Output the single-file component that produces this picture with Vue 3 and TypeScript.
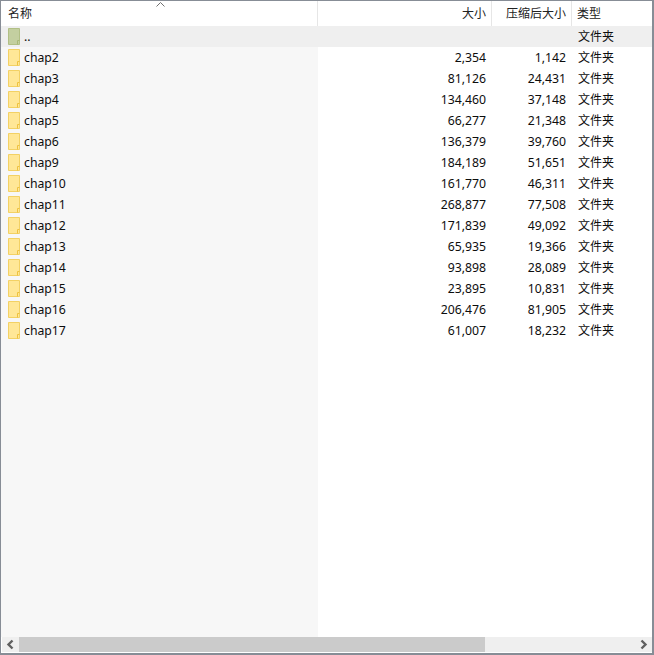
<script setup lang="ts">
interface Row { name: string; size: string; packed: string; parent?: boolean }
const rows: Row[] = [
  { name: '..', size: '', packed: '', parent: true },
  { name: 'chap2', size: '2,354', packed: '1,142' },
  { name: 'chap3', size: '81,126', packed: '24,431' },
  { name: 'chap4', size: '134,460', packed: '37,148' },
  { name: 'chap5', size: '66,277', packed: '21,348' },
  { name: 'chap6', size: '136,379', packed: '39,760' },
  { name: 'chap9', size: '184,189', packed: '51,651' },
  { name: 'chap10', size: '161,770', packed: '46,311' },
  { name: 'chap11', size: '268,877', packed: '77,508' },
  { name: 'chap12', size: '171,839', packed: '49,092' },
  { name: 'chap13', size: '65,935', packed: '19,366' },
  { name: 'chap14', size: '93,898', packed: '28,089' },
  { name: 'chap15', size: '23,895', packed: '10,831' },
  { name: 'chap16', size: '206,476', packed: '81,905' },
  { name: 'chap17', size: '61,007', packed: '18,232' },
]
</script>

<template>
  <div class="win">
    <div class="head">
      <div class="h name">名称<svg class="sort" width="9" height="5" viewBox="0 0 9 5"><path d="M0.5 4.5 L4.5 0.5 L8.5 4.5" fill="none" stroke="#707070" stroke-width="1"/></svg></div>
      <div class="h num">大小</div>
      <div class="h num">压缩后大小</div>
      <div class="h type">类型</div>
    </div>
    <div class="body">
      <div v-for="r in rows" :key="r.name" class="row" :class="{ parent: r.parent }">
        <div class="c name">
          <svg class="ico" width="13" height="17" viewBox="0 0 13 17">
            <path d="M0.5 0.5 H11.5 V16.5 H0.5 Z" :fill="r.parent ? '#c3cfa0' : '#ffe797'" :stroke="r.parent ? '#b1bf85' : '#f3d164'"/>
            <path d="M9.5 16.5 V12.5 H11.5" fill="none" :stroke="r.parent ? '#a9b878' : '#eec240'"/>
          </svg>
          <span>{{ r.name }}</span>
        </div>
        <div class="c num">{{ r.size }}</div>
        <div class="c num">{{ r.packed }}</div>
        <div class="c type">文件夹</div>
      </div>
    </div>
    <div class="scroll">
      <svg class="arrow" width="17" height="15" viewBox="0 0 17 15"><path d="M10.5 3.5 L6.5 7.5 L10.5 11.5" fill="none" stroke="#606060" stroke-width="2.4"/></svg>
      <div class="track"><div class="thumb"></div></div>
      <svg class="arrow" width="17" height="15" viewBox="0 0 17 15"><path d="M6.5 3.5 L10.5 7.5 L6.5 11.5" fill="none" stroke="#606060" stroke-width="2.4"/></svg>
    </div>
  </div>
</template>

<style>
html, body { margin: 0; background: #fff; }
</style>

<style scoped>
.win {
  width: 654px;
  height: 655px;
  box-sizing: border-box;
  border: 1px solid #878d96;
  border-width: 1px 2px 2px 1px;
  display: flex;
  flex-direction: column;
  font: 12px "Noto Sans", "Noto Sans CJK SC", sans-serif;
  color: #0d0d0d;
  background: #fff;
  overflow: hidden;
}
.head, .row {
  display: grid;
  grid-template-columns: 317px 174px 80px 1fr;
  flex: none;
}
.head { height: 25px; }
.h {
  position: relative;
  box-sizing: border-box;
  height: 25px;
  line-height: 25px;
  border-right: 1px solid #e6e6e6;
  padding: 0 5px 0 7px;
  color: #222;
}
.h.type { border-right: 0; padding-left: 5px; }
.h.num { text-align: right; }
.sort { position: absolute; left: 155px; top: 1px; }
.body {
  flex: 1;
  background: linear-gradient(to right, #f7f7f7 317px, #fff 317px);
}
.row { height: 21px; line-height: 21px; }
.row.parent { background: #efefef; }
.c { box-sizing: border-box; white-space: nowrap; }
.c.name { display: flex; align-items: center; gap: 3px; padding-left: 7px; font-size: 12.25px; }
.c.num { text-align: right; padding-right: 6px; font-size: 12.25px; }
.c.type { padding-left: 6px; }
.ico { flex: none; }
.scroll {
  height: 15px;
  flex: none;
  display: flex;
  align-items: center;
  margin: 0 0 1px 1px;
  background: #efefef;
}
.arrow { flex: none; }
.track { flex: 1; height: 15px; }
.thumb { width: 466px; height: 15px; background: #cbcbcb; }
</style>
